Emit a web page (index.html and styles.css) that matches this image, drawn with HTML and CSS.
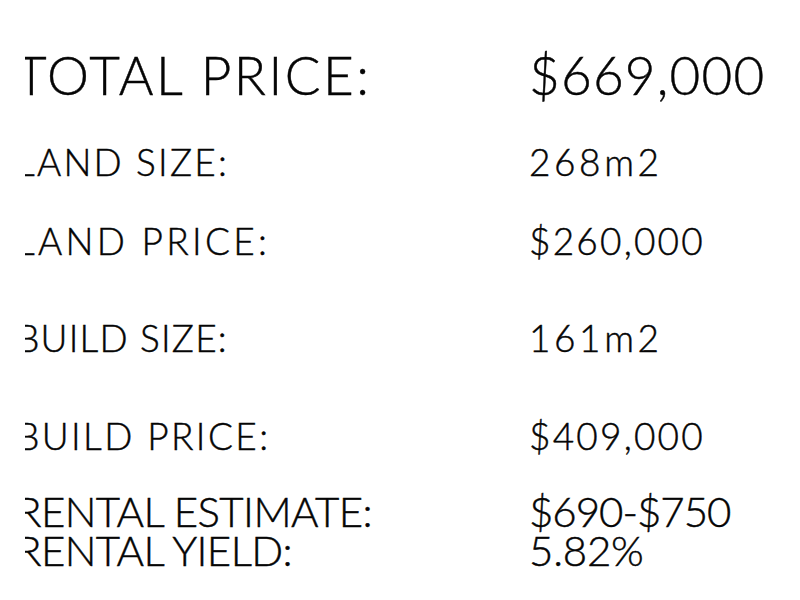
FILE: index.html
```html
<!DOCTYPE html>
<html>
<head>
<meta charset="utf-8">
<link rel="stylesheet" href="styles.css">
</head>
<body>
<div class="sheet">
  <div class="row row-total">
    <div class="label"><span class="label-text">TOTAL PRICE:</span></div>
    <div class="value">$669,000</div>
  </div>
  <div class="row row-land-size">
    <div class="label"><span class="label-text">LAND SIZE:</span></div>
    <div class="value">268m2</div>
  </div>
  <div class="row row-land-price">
    <div class="label"><span class="label-text">LAND PRICE:</span></div>
    <div class="value">$260,000</div>
  </div>
  <div class="row row-build-size">
    <div class="label"><span class="label-text">BUILD SIZE:</span></div>
    <div class="value">161m2</div>
  </div>
  <div class="row row-build-price">
    <div class="label"><span class="label-text">BUILD PRICE:</span></div>
    <div class="value">$409,000</div>
  </div>
  <div class="row row-rental-est">
    <div class="label"><span class="label-text">RENTAL ESTIMATE:</span></div>
    <div class="value">$690-$750</div>
  </div>
  <div class="row row-rental-yield">
    <div class="label"><span class="label-text">RENTAL YIELD:</span></div>
    <div class="value">5.82%</div>
  </div>
</div>
</body>
</html>
```
FILE: styles.css
```css
html, body {
  margin: 0;
  padding: 0;
  background: #ffffff;
}
body {
  width: 800px;
  height: 600px;
  overflow: hidden;
  font-family: Lato, "DejaVu Sans", sans-serif;
  font-weight: 300;
  color: #050505;
  -webkit-text-stroke: 0.45px #050505;
}
.sheet {
  padding-left: 25px;
  padding-top: 48px;
}
.row {
  display: grid;
  grid-template-columns: 503px 1fr;
  white-space: nowrap;
}
.label {
  overflow: hidden;
}
.label-text {
  display: inline-block;
  margin-left: -9px;
}
.value {
  margin-left: 1px;
}
.row-total {
  font-size: 53px;
  line-height: 53px;
  letter-spacing: 2.5px;
}
.row-total .value {
  letter-spacing: 1.2px;
}
.row-land-size,
.row-land-price,
.row-build-size,
.row-build-price {
  font-size: 37px;
  line-height: 37px;
}
.row-land-size { margin-top: 42px; letter-spacing: 2.2px; }
.row-land-price { margin-top: 42px; letter-spacing: 3.3px; }
.row-build-size { margin-top: 60px; letter-spacing: 1.2px; }
.row-build-price { margin-top: 61px; letter-spacing: 2.4px; }
.row-land-size .value,
.row-build-size .value {
  letter-spacing: 3.6px;
}
.row-land-price .value,
.row-build-price .value {
  letter-spacing: 2.2px;
}
.row-rental-est,
.row-rental-yield {
  font-size: 42px;
  line-height: 39px;
  letter-spacing: -0.6px;
}
.row-rental-est .value {
  letter-spacing: -1px;
}
.row-rental-yield .value {
  letter-spacing: -0.2px;
}
.row-rental-est { margin-top: 38px; }
```
